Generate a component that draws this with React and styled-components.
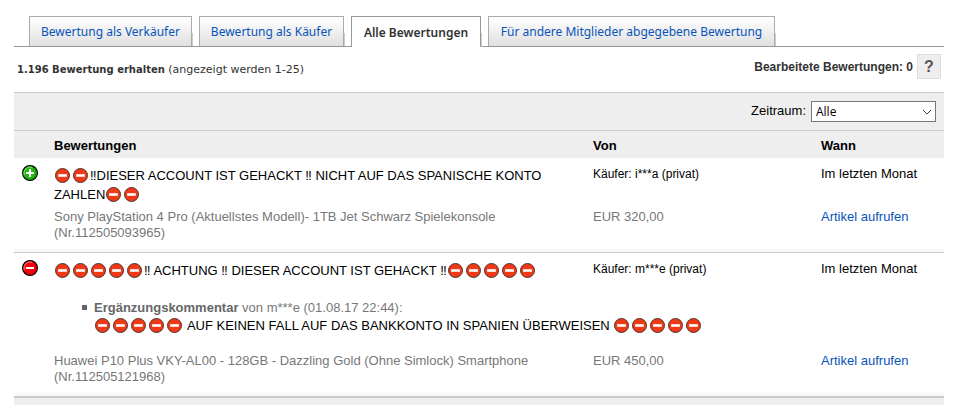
import React from 'react';
import styled, { createGlobalStyle, css } from 'styled-components';

const GlobalStyle = createGlobalStyle`
  * { box-sizing: border-box; }
  body {
    margin: 0;
    background: #fff;
    color: #000;
    font: 13px/16px "Liberation Sans", Arial, sans-serif;
  }
`;

const Page = styled.main`
  padding: 16px 15px 0 14px;
`;

const Tabs = styled.nav`
  display: flex;
  align-items: flex-start;
  gap: 7px;
  padding-left: 15px;
  border-bottom: 1px solid #999;
`;

const Tab = styled.a`
  position: relative;
  height: 30px;
  min-width: ${({ $width }) => $width}px;
  padding: 0 10px;
  border: 1px solid #aaa;
  border-bottom: 0;
  background: linear-gradient(#fff, #e0e0e0);
  color: #0654ba;
  font: 12px/30px "Noto Sans", "Trebuchet MS", sans-serif;
  text-align: center;
  text-decoration: none;
  white-space: nowrap;

  &::after {
    content: "";
    position: absolute;
    top: 16px;
    right: -2px;
    bottom: 0;
    width: 1px;
    background: #ccc;
  }

  ${({ $active }) =>
    $active &&
    css`
      height: 31px;
      margin-bottom: -1px;
      border-color: #999;
      background: #fff;
      color: #333;
      font-weight: 600;
      line-height: 32px;
    `}
`;

const Summary = styled.div`
  display: flex;
  justify-content: space-between;
  align-items: center;
  height: 45px;
  padding: 0 3px;
`;

const Count = styled.p`
  margin: 0;
  color: #333;
  font: 11px/16px Verdana, "DejaVu Sans", sans-serif;

  b { font-size: 10px; }
`;

const Edited = styled.div`
  display: flex;
  align-items: center;
  gap: 4px;
  padding-bottom: 6px;
  color: #333;
  font-size: 12px;
  font-weight: bold;
`;

const HelpButton = styled.button`
  width: 24px;
  height: 25px;
  padding: 0;
  border: 1px solid #ddd;
  background: #eee;
  color: #555;
  font: bold 16px/22px "Liberation Sans", Arial, sans-serif;
`;

const FilterBar = styled.div`
  display: flex;
  justify-content: flex-end;
  gap: 5px;
  padding: 8px 8px;
  border-top: 1px solid #ccc;
  border-bottom: 1px solid #ccc;
  background: #eee;
`;

const FilterLabel = styled.label`
  line-height: 19px;
`;

const SelectBox = styled.span`
  position: relative;
  display: flex;

  svg {
    position: absolute;
    top: 8px;
    right: 4px;
    pointer-events: none;
  }
`;

const Select = styled.select`
  appearance: none;
  width: 125px;
  height: 21px;
  padding: 0 20px 0 4px;
  border: 1px solid #777;
  border-radius: 0;
  background: #fff;
  color: #000;
  font: 12px/19px "Open Sans", "Segoe UI", sans-serif;
`;

const FeedbackTable = styled.table`
  width: 100%;
  border-collapse: collapse;
  table-layout: fixed;
`;

const Column = styled.col`
  width: ${({ $width }) => $width};
`;

const HeadCell = styled.th`
  height: 27px;
  padding: 2px 0 0;
  background: #eee;
  text-align: left;
`;

const Entry = styled.tbody`
  border-bottom: ${({ $last }) => ($last ? '2px' : '1px')} solid #ccc;
`;

const Cell = styled.td`
  padding: 8px 0 0;
  vertical-align: top;
`;

const IconCell = styled(Cell)`
  padding: 7px 0 0 8px;

  svg { display: block; }
`;

const CommentCell = styled(Cell)`
  padding-right: 20px;
  line-height: 19px;
`;

const BuyerCell = styled(Cell)`
  font-size: 12px;
`;

const DetailRow = styled.tr`
  background: linear-gradient(#fff 0, #fff calc(100% - 6px), #f4f4f4 100%);
`;

const DetailCell = styled.td`
  padding: ${({ $spaced }) => ($spaced ? '18px 20px 11px 0' : '5px 20px 11px 0')};
  color: #777;
  vertical-align: top;
`;

const ItemLink = styled.a`
  color: #0654ba;
  text-decoration: none;
`;

const FollowUps = styled.ul`
  margin: 0;
  padding: 12px 0 0 40px;
  list-style: none;
`;

const FollowUp = styled.li`
  position: relative;
  color: #777;

  b { color: #666; }

  &::before {
    content: "";
    position: absolute;
    top: 5px;
    left: -12px;
    width: 5px;
    height: 5px;
    background: #666;
  }
`;

const FollowUpText = styled.div`
  color: #000;
  line-height: 19px;
`;

const SignSvg = styled.svg`
  display: inline-block;
  width: 18px;
  height: 15px;
  vertical-align: -3px;
`;

function NoEntry() {
  return (
    <SignSvg viewBox="0 0 18 15" role="img" aria-label="⛔">
      <circle cx="8.5" cy="7.5" r="7" fill="#f03a17" stroke="#3d2a26" strokeWidth="0.9" />
      <rect x="4" y="6" width="9" height="3" fill="#f9b3a4" />
      <rect x="4.5" y="6.5" width="8" height="2" fill="#fff" />
    </SignSvg>
  );
}

function Signs({ count }) {
  return Array.from({ length: count }, (_, i) => <NoEntry key={i} />);
}

function RatingIcon({ positive }) {
  const fill = positive ? '#22b80e' : '#f5000c';
  const dark = positive ? '#178006' : '#b00008';
  const light = positive ? '#8fe57c' : '#ff8a8a';
  return (
    <svg width="16" height="16" viewBox="0 0 16 16" role="img" aria-label={positive ? 'Positiv' : 'Negativ'}>
      <circle cx="8" cy="8" r="7.4" fill={fill} stroke="#000" strokeWidth="1.2" />
      <path d="M3.4 12.6A6.4 6.4 0 0 0 12.6 3.4" fill="none" stroke={dark} strokeWidth="1.2" />
      <path d="M2.2 10A6.2 6.2 0 0 1 10 2.2" fill="none" stroke={light} />
      <path d={positive ? 'M4 8h8M8 4v8' : 'M4 8h8'} stroke="#fff" strokeWidth="2" />
    </svg>
  );
}

const tabs = [
  { label: 'Bewertung als Verkäufer', width: 163 },
  { label: 'Bewertung als Käufer', width: 145 },
  { label: 'Alle Bewertungen', width: 130, active: true },
  { label: 'Für andere Mitglieder abgegebene Bewertung', width: 287 },
];

export default function App() {
  return (
    <Page>
      <GlobalStyle />
      <Tabs>
        {tabs.map(({ label, width, active }) => (
          <Tab key={label} href="#" $width={width} $active={active} aria-current={active ? 'page' : undefined}>
            {label}
          </Tab>
        ))}
      </Tabs>
      <Summary>
        <Count>
          <b>1.196 Bewertung erhalten</b> (angezeigt werden 1-25)
        </Count>
        <Edited>
          Bearbeitete Bewertungen: 0 <HelpButton type="button">?</HelpButton>
        </Edited>
      </Summary>
      <FilterBar>
        <FilterLabel htmlFor="period">Zeitraum:</FilterLabel>
        <SelectBox>
          <Select id="period" defaultValue="Alle">
            <option>Alle</option>
          </Select>
          <svg width="10" height="6" viewBox="0 0 10 6" aria-hidden="true">
            <path d="M1 1l4 4 4-4" fill="none" stroke="#444" />
          </svg>
        </SelectBox>
      </FilterBar>
      <FeedbackTable>
        <colgroup>
          <Column $width="40px" />
          <Column $width="auto" />
          <Column $width="228px" />
          <Column $width="123px" />
        </colgroup>
        <thead>
          <tr>
            <HeadCell />
            <HeadCell scope="col">Bewertungen</HeadCell>
            <HeadCell scope="col">Von</HeadCell>
            <HeadCell scope="col">Wann</HeadCell>
          </tr>
        </thead>
        <Entry>
          <tr>
            <IconCell><RatingIcon positive /></IconCell>
            <CommentCell>
              <Signs count={2} />‼DIESER ACCOUNT IST GEHACKT ‼ NICHT AUF DAS SPANISCHE KONTO ZAHLEN<Signs count={2} />
            </CommentCell>
            <BuyerCell>Käufer: i***a (privat)</BuyerCell>
            <Cell>Im letzten Monat</Cell>
          </tr>
          <DetailRow>
            <DetailCell />
            <DetailCell>Sony PlayStation 4 Pro (Aktuellstes Modell)- 1TB Jet Schwarz Spielekonsole (Nr.112505093965)</DetailCell>
            <DetailCell>EUR 320,00</DetailCell>
            <DetailCell><ItemLink href="#">Artikel aufrufen</ItemLink></DetailCell>
          </DetailRow>
        </Entry>
        <Entry $last>
          <tr>
            <IconCell><RatingIcon /></IconCell>
            <CommentCell>
              <Signs count={5} />‼ ACHTUNG ‼ DIESER ACCOUNT IST GEHACKT ‼<Signs count={5} />
            </CommentCell>
            <BuyerCell>Käufer: m***e (privat)</BuyerCell>
            <Cell>Im letzten Monat</Cell>
          </tr>
          <tr>
            <Cell />
            <Cell colSpan={3}>
              <FollowUps>
                <FollowUp>
                  <b>Ergänzungskommentar</b> von m***e (01.08.17 22:44):
                  <FollowUpText>
                    <Signs count={5} /> AUF KEINEN FALL AUF DAS BANKKONTO IN SPANIEN ÜBERWEISEN <Signs count={5} />
                  </FollowUpText>
                </FollowUp>
              </FollowUps>
            </Cell>
          </tr>
          <DetailRow>
            <DetailCell $spaced />
            <DetailCell $spaced>Huawei P10 Plus VKY-AL00 - 128GB - Dazzling Gold (Ohne Simlock) Smartphone (Nr.112505121968)</DetailCell>
            <DetailCell $spaced>EUR 450,00</DetailCell>
            <DetailCell $spaced><ItemLink href="#">Artikel aufrufen</ItemLink></DetailCell>
          </DetailRow>
        </Entry>
        <tfoot>
          <tr>
            <HeadCell colSpan={4} />
          </tr>
        </tfoot>
      </FeedbackTable>
    </Page>
  );
}
